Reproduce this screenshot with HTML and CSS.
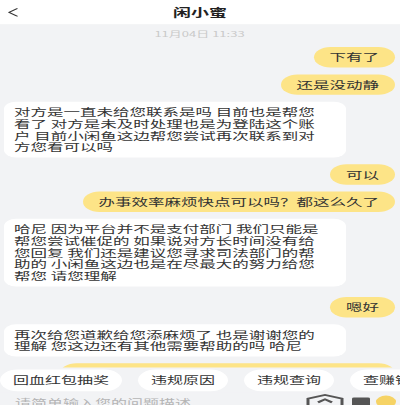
FILE: index.html
```html
<!DOCTYPE html>
<html lang="zh-CN">
<head>
<meta charset="utf-8">
<title>闲小蜜</title>
<link rel="stylesheet" href="styles.css">
</head>
<body>
<div class="screen">
  <header class="topbar">
    <svg class="back" width="12" height="14" viewBox="0 0 12 14"><path d="M10 1 L2 7 L10 13" fill="none" stroke="#333" stroke-width="1.6" stroke-linecap="round" stroke-linejoin="round"/></svg>
    <h1 class="title">闲小蜜</h1>
  </header>

  <main class="chat">
    <div class="time">11月04日 11:33</div>
    <div class="msg me">下有了</div>
    <div class="msg me">还是没动静</div>
    <div class="msg bot">对方是一直未给您联系是吗 目前也是帮您看了 对方是未及时处理也是为登陆这个账户 目前小闲鱼这边帮您尝试再次联系到对方您看可以吗</div>
    <div class="msg me">可以</div>
    <div class="msg me">办事效率麻烦快点可以吗？都这么久了</div>
    <div class="msg bot">哈尼 因为平台并不是支付部门 我们只能是帮您尝试催促的 如果说对方长时间没有给您回复 我们还是建议您寻求司法部门的帮助的 小闲鱼这边也是在尽最大的努力给您帮您 请您理解</div>
    <div class="msg me spaced">嗯好</div>
    <div class="msg bot">再次给您道歉给您添麻烦了 也是谢谢您的理解 您这边还有其他需要帮助的吗 哈尼</div>
    <div class="msg me tail"></div>
  </main>

  <nav class="chips">
    <span class="chip">回血红包抽奖</span>
    <span class="chip">违规原因</span>
    <span class="chip">违规查询</span>
    <span class="chip">查赚钱</span>
  </nav>

  <footer class="inputbar">
    <span class="placeholder">请简单输入您的问题描述</span>
    <span class="tools">
      <svg width="38" height="22" viewBox="0 0 38 22"><path d="M2 20 L2 8 L19 2 L36 8 L36 20" fill="none" stroke="#555" stroke-width="3"/><path d="M12 14 L19 9 L26 14" fill="none" stroke="#555" stroke-width="3"/></svg>
      <svg width="50" height="22" viewBox="0 0 50 22"><rect x="2" y="6" width="18" height="16" rx="2" fill="#555"/><circle cx="36" cy="13" r="10" fill="#f6d365"/></svg>
    </span>
  </footer>
</div>
</body>
</html>
```

FILE: styles.css
```css
html, body {
  margin: 0;
  padding: 0;
  background: #f2f3f5;
  overflow: hidden;
}

.screen {
  width: 400px;
  height: 654px;
  transform: scaleY(0.62);
  transform-origin: 0 0;
  display: flex;
  flex-direction: column;
  font-family: "Noto Sans CJK SC", "Noto Sans", sans-serif;
  color: #333;
  background: #f2f3f5;
}

.topbar {
  height: 39px;
  flex: none;
  background: #fff;
  display: flex;
  align-items: center;
  justify-content: center;
  position: relative;
}

.back {
  position: absolute;
  left: 7px;
  top: 13px;
}

.title {
  margin: 0;
  font-size: 18px;
  font-weight: 700;
  color: #222;
  line-height: 24px;
}

.chat {
  flex: 1;
  overflow: hidden;
  display: flex;
  flex-direction: column;
  gap: 11px;
  padding: 8px 5px 0 4px;
}

.time {
  align-self: center;
  font-size: 13px;
  line-height: 16px;
  color: #c9c9c9;
  margin-bottom: 2px;
}

.msg {
  font-size: 16.5px;
  line-height: 19px;
  padding: 7px 16px;
  flex: none;
}

.me {
  align-self: flex-end;
  background: #fde487;
  border-radius: 17px;
}

.spaced {
  margin-top: 6px;
}

/* next outgoing message, scrolled mostly under the quick-reply bar */
.tail {
  width: 303px;
  height: 19px;
}

.bot {
  align-self: flex-start;
  background: #fff;
  border-radius: 12px;
  max-width: 342px;
  box-sizing: border-box;
  padding: 7px 24px 7px 10px;
}

.chips {
  flex: none;
  height: 40px;
  display: flex;
  align-items: center;
  gap: 16px;
  background: #f2f3f5;
  white-space: nowrap;
  overflow: hidden;
}

.chip {
  flex: none;
  background: #fff;
  border-radius: 18px;
  height: 35px;
  line-height: 35px;
  padding: 0 13px;
  font-size: 16px;
  color: #333;
}

.inputbar {
  flex: none;
  height: 21px;
  background: #f2f3f5;
  display: flex;
  align-items: flex-start;
  justify-content: space-between;
  overflow: hidden;
}

.placeholder {
  margin: 6px 0 0 15px;
  font-size: 16px;
  line-height: 20px;
  color: #b5b5b5;
}

.tools {
  display: flex;
  gap: 6px;
  margin: 2px 0 0 0;
}
```
